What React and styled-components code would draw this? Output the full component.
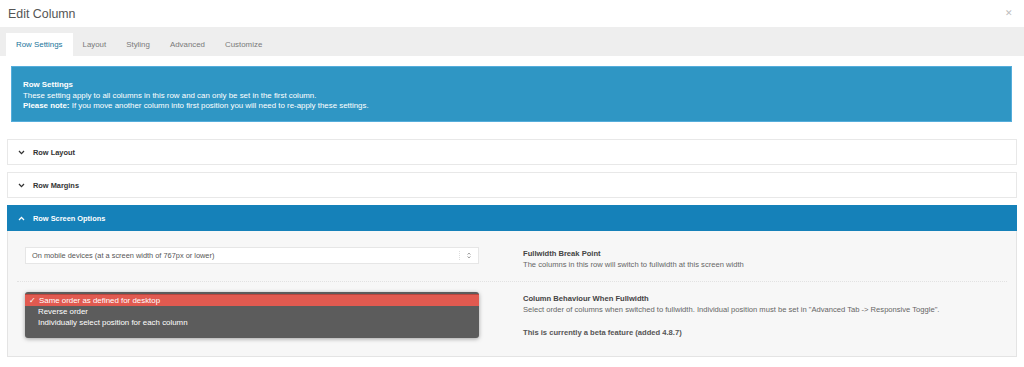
import React from 'react';
import styled, { createGlobalStyle } from 'styled-components';

const GlobalStyle = createGlobalStyle`
  body{
    margin: 0;
    background: #ffffff;
    font-family: "Liberation Sans", Arial, sans-serif;
  }
`

const Modal = styled.div`
  width: 1024px;
  height: 367px;
  background: #fff;
`

const Header = styled.div`
  height: 27px;
  display: flex;
  align-items: center;
  justify-content: space-between;
  padding: 0 11px 0 8px;
  box-sizing: border-box;
`

const Title = styled.h1`
  margin: 0;
  font-size: 12.4px;
  font-weight: normal;
  color: #555555;
`

const Close = styled.span`
  font-size: 9px;
  color: #bdbdbd;
  line-height: 1;
`

const TabBar = styled.div`
  display: flex;
  align-items: flex-end;
  height: 29px;
  padding-left: 6px;
  background: #eeeeee;
  box-sizing: border-box;
`

const Tab = styled.div`
  height: 23px;
  padding: 0 10px;
  display: flex;
  align-items: center;
  font-size: 7.9px;
  color: ${p => p.active ? '#21759b' : '#7a7a7a'};
  background: ${p => p.active ? '#ffffff' : 'transparent'};
`

const Content = styled.div`
  padding: 10px 7px 0 7px;
`

const Notice = styled.div`
  margin: 0 5px 17px 4px;
  height: 56px;
  box-sizing: border-box;
  padding: 13px 11px 0 11px;
  background: #2f96c4;
  border: 1px solid #55addb;
  color: #ffffff;
  font-size: 7.9px;
  line-height: 10.6px;

  b{ font-weight: bold; }
`

const Panel = styled.div`
  margin-bottom: ${p => p.open ? '0' : '7px'};
  border: 1px solid ${p => p.open ? '#1581b9' : '#e8e8e8'};
  background: ${p => p.open ? '#1581b9' : '#ffffff'};
  height: 26px;
  box-sizing: border-box;
  display: flex;
  align-items: center;
  padding-left: 10px;
  gap: 8px;
  font-size: 7.4px;
  font-weight: bold;
  color: ${p => p.open ? '#ffffff' : '#333333'};
`

const Body = styled.div`
  background: #f7f7f7;
  border: 1px solid #e4e4e4;
  border-top: none;
  height: 126px;
  box-sizing: border-box;
`

const OptionRow = styled.div`
  display: grid;
  grid-template-columns: 454px 1fr;
  column-gap: 44px;
  padding: ${p => p.first ? '16px 16px 0 16px' : '10px 16px 0 16px'};
  height: ${p => p.first ? '51px' : 'auto'};
  box-sizing: border-box;
  border-bottom: ${p => p.first ? '1px dotted #e2e2e2' : 'none'};
  margin: ${p => p.first ? '0 9px 0 9px' : '0'};
  padding-left: ${p => p.first ? '8px' : '17px'};
`

const Select = styled.div`
  height: 17px;
  box-sizing: border-box;
  background: #ffffff;
  border: 1px solid #e6e6e6;
  display: flex;
  align-items: center;
  justify-content: space-between;
  padding: 0 7px 0 6px;
  font-size: 7.4px;
  color: #555555;
`

const Arrows = styled.span`
  display: flex;
  align-items: center;
  gap: 6px;
  height: 100%;

  &:before{
    content: '';
    width: 1px;
    height: 9px;
    border-left: 1px dotted #dddddd;
  }
`

const Menu = styled.div`
  background: #5c5c5c;
  border-radius: 3px;
  padding: 2px 0 4px;
  box-shadow: 0 1px 4px rgba(0,0,0,0.35);
  width: 454px;
  box-sizing: border-box;
`

const MenuItem = styled.div`
  height: 11.5px;
  display: flex;
  align-items: center;
  padding-left: ${p => p.selected ? '4px' : '13px'};
  gap: 3px;
  font-size: 7.9px;
  color: #ffffff;
  background: ${p => p.selected ? '#e15a50' : 'transparent'};
  border-top: ${p => p.selected ? '1px solid #b8463e' : 'none'};
  box-sizing: border-box;
`

const Info = styled.div`
  font-size: 7.6px;
  line-height: 11px;
  color: #666666;
`

const InfoTitle = styled.div`
  font-weight: bold;
  color: #444444;
  margin-top: ${p => p.offset || 0}px;
`

const InfoNote = styled.div`
  margin-top: 12px;
  font-weight: bold;
  color: #555555;
`

function Chevron({ up, color }){
  return(
    <svg width="7" height="5" viewBox="0 0 7 5">
      <path
        d={up ? 'M1 4 L3.5 1.4 L6 4' : 'M1 1 L3.5 3.6 L6 1'}
        fill="none"
        stroke={color}
        strokeWidth="1.3"
      />
    </svg>
  )
}

function UpDown(){
  return(
    <svg width="4" height="7" viewBox="0 0 4 7">
      <path d="M0.6 2.6 L2 1 L3.4 2.6 M0.6 4.4 L2 6 L3.4 4.4" fill="none" stroke="#888" strokeWidth="0.8" />
    </svg>
  )
}

const tabs = ['Row Settings', 'Layout', 'Styling', 'Advanced', 'Customize']

function App(){
  return(
    <Modal>
      <GlobalStyle />
      <Header>
        <Title>Edit Column</Title>
        <Close>✕</Close>
      </Header>
      <TabBar>
        {tabs.map((t, i) => <Tab key={t} active={i === 0}>{t}</Tab>)}
      </TabBar>
      <Content>
        <Notice>
          <b>Row Settings</b><br />
          These setting apply to all columns in this row and can only be set in the first column.<br />
          <b>Please note:</b> If you move another column into first position you will need to re-apply these settings.
        </Notice>

        <Panel><Chevron color="#333" />Row Layout</Panel>
        <Panel><Chevron color="#333" />Row Margins</Panel>
        <Panel open><Chevron up color="#fff" />Row Screen Options</Panel>

        <Body>
          <OptionRow first>
            <Select>
              On mobile devices (at a screen width of 767px or lower)
              <Arrows><UpDown /></Arrows>
            </Select>
            <Info>
              <InfoTitle offset={1}>Fullwidth Break Point</InfoTitle>
              The columns in this row will switch to fullwidth at this screen width
            </Info>
          </OptionRow>
          <OptionRow>
            <Menu>
              <MenuItem selected><span>✓</span>Same order as defined for desktop</MenuItem>
              <MenuItem>Reverse order</MenuItem>
              <MenuItem>Individually select position for each column</MenuItem>
            </Menu>
            <Info>
              <InfoTitle offset={1}>Column Behaviour When Fullwidth</InfoTitle>
              Select order of columns when switched to fullwidth. Individual position must be set in "Advanced Tab -&gt; Responsive Toggle".
              <InfoNote>This is currently a beta feature (added 4.8.7)</InfoNote>
            </Info>
          </OptionRow>
        </Body>
      </Content>
    </Modal>
  )
}

export default App;
